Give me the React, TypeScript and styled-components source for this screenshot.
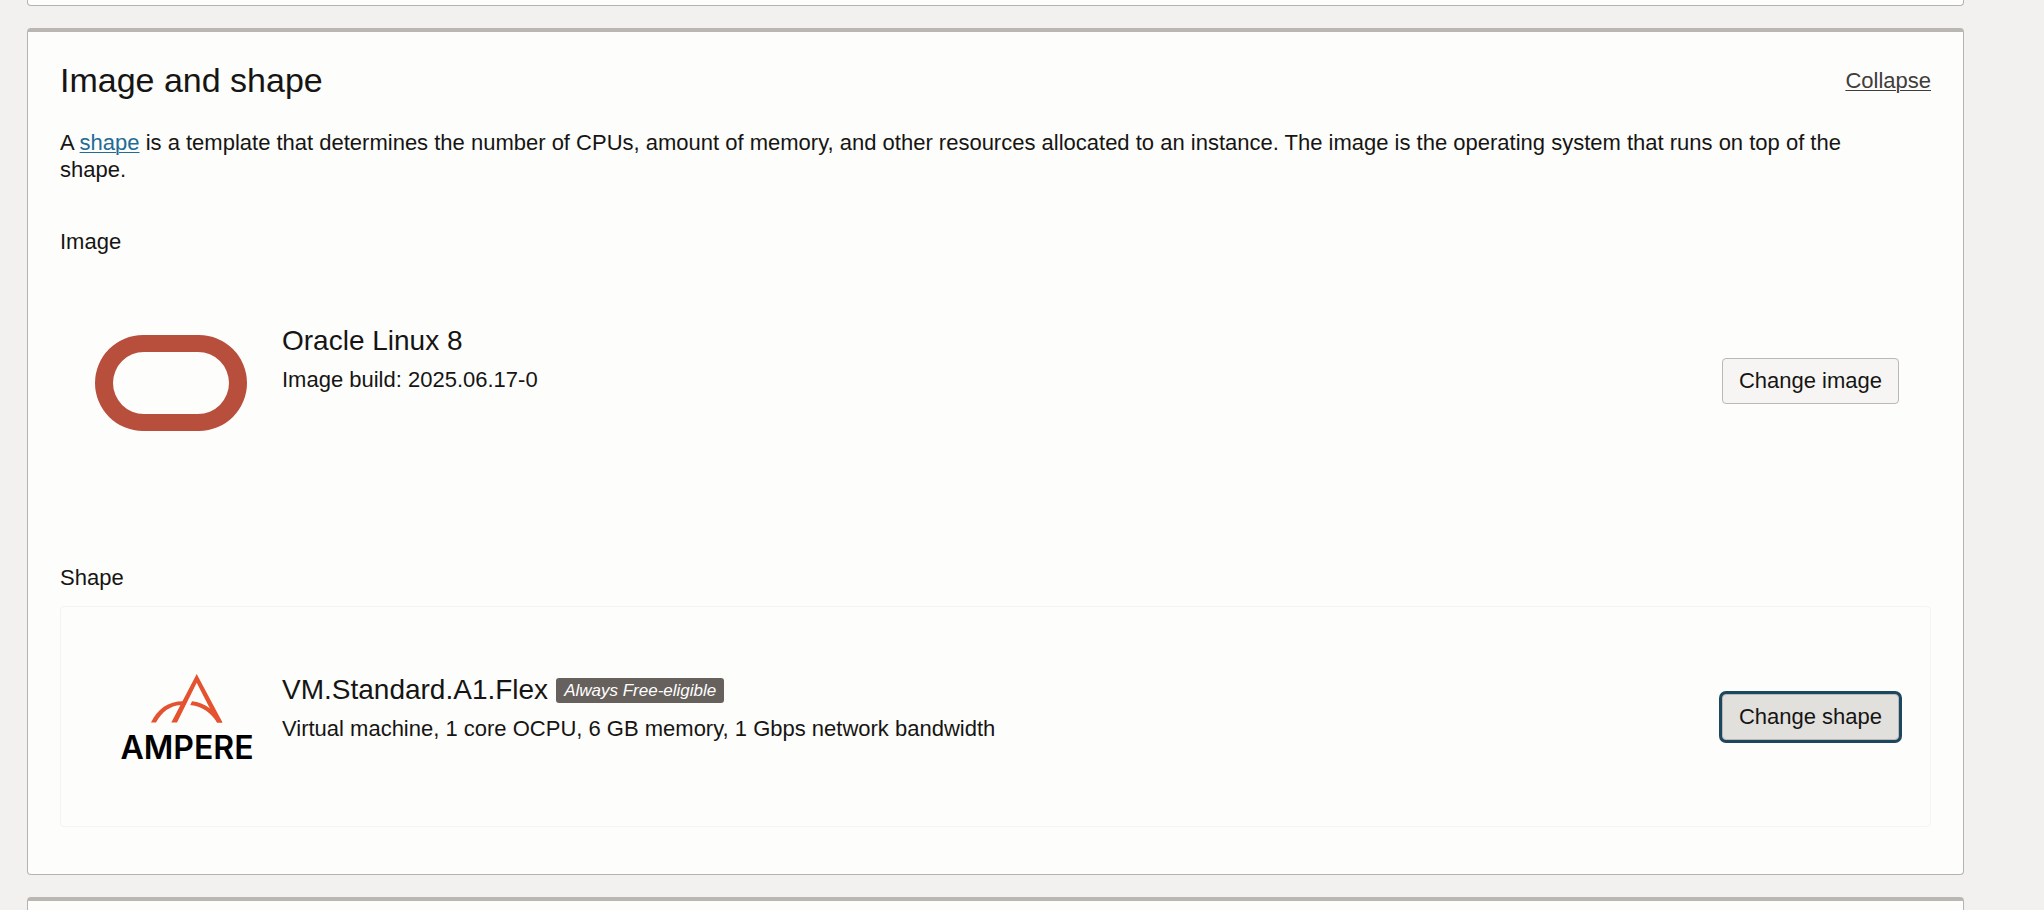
import React from "react";
import styled, { createGlobalStyle, css } from "styled-components";

const GlobalStyle = createGlobalStyle`
  *, *::before, *::after { box-sizing: border-box; }
  body {
    margin: 0;
    background: #f2f1f0;
    color: #161513;
    font-family: "Liberation Sans", Arial, sans-serif;
    font-size: 22px;
    line-height: 27px;
  }
  h2, h3, h4, p { margin: 0; font-weight: 400; }
`;

const Page = styled.main`
  display: flex;
  flex-direction: column;
  gap: 22px;
  min-height: 100vh;
  padding: 0 80px 0 27px;
`;

const Panel = styled.section`
  padding: 28px 32px 47px;
  background: #fdfdfc;
  border: 1px solid #b5b3b0;
  border-top: 4px solid #bab6b1;
  border-radius: 4px;
`;

const PreviousPanel = styled(Panel)`
  padding: 5px 0 0;
  border-top: 0;
  border-radius: 0 0 4px 4px;
`;

const NextPanel = styled(Panel)`
  flex: 1;
  padding: 0;
  border-bottom: 0;
  border-radius: 4px 4px 0 0;
`;

const PanelHeader = styled.header`
  display: flex;
  align-items: center;
  justify-content: space-between;
`;

const PanelTitle = styled.h2`
  font-size: 34px;
  line-height: 40px;
`;

const CollapseLink = styled.a`
  color: #403e3b;
  text-underline-offset: 2px;
  text-decoration-thickness: 1px;
`;

const Description = styled.p`
  margin-top: 29px;
  padding-right: 32px;

  a {
    color: #226b95;
    text-decoration-thickness: 1px;
    text-underline-offset: 2px;
  }
`;

const Field = styled.section<{ $gap: number }>`
  margin-top: ${({ $gap }) => $gap}px;
`;

const FieldLabel = styled.h3`
  margin-bottom: 15px;
  font-size: 22px;
`;

const OptionBox = styled.div<{ $outlined?: boolean }>`
  display: flex;
  align-items: center;
  min-height: 221px;
  padding: 0 31px 0 23px;
  border: 1px solid ${({ $outlined }) => ($outlined ? "#f4f4f3" : "transparent")};
  border-radius: 4px;
`;

const Logo = styled.svg`
  flex: none;
  width: 182px;
  height: 100px;
  margin-right: 16px;
`;

const OptionText = styled.div<{ $spaceBelow: number }>`
  flex: 1;
  padding-bottom: ${({ $spaceBelow }) => $spaceBelow}px;
`;

const OptionTitle = styled.h4`
  display: flex;
  align-items: center;
  gap: 8px;
  margin-bottom: 8px;
  font-size: 28px;
  line-height: 34px;
`;

const Badge = styled.span`
  padding: 0 8px;
  border-radius: 3px;
  background: #66615c;
  color: #fff;
  font-size: 17px;
  font-style: italic;
  line-height: 25px;
`;

const ChangeButton = styled.button<{ $active?: boolean }>`
  flex: none;
  height: 46px;
  padding: 0 16px;
  border: 1px solid #bbb8b5;
  border-radius: 4px;
  background: #f6f5f4;
  color: #161513;
  font: inherit;
  ${({ $active }) =>
    $active &&
    css`
      background: #e2e0dd;
      box-shadow: 0 0 0 3px #1d475e;
    `}
`;

const Wordmark = styled.text`
  fill: #000;
  font-family: Inter, sans-serif;
  font-size: 32px;
  font-weight: 600;
`;

function OracleLogo() {
  return (
    <Logo viewBox="0 0 182 100" role="img" aria-label="Oracle">
      <path
        fill="#b84f3c"
        fillRule="evenodd"
        d="M59 4h56a48 48 0 0 1 0 96H59a48 48 0 0 1 0-96Zm1 17a31 31 0 0 0 0 62h54a31 31 0 0 0 0-62Z"
      />
    </Logo>
  );
}

function AmpereLogo() {
  return (
    <Logo viewBox="0 0 182 100" role="img" aria-label="Ampere">
      <g fill="#e5522f">
        <path d="M112.7 7 138.5 55.500h-5.400L112.700 15.800 93 55.500h-5.700Z" />
        <path d="M67 55.500C73.500 42 84 34.200 99 34.200l-2 3.900C85.500 39 78 45 72 55.500Z" />
        <path d="M108 34.200C121 35.600 131.500 43.500 138.300 55.500h-5.200C127 46 119 39.500 106.300 38Z" />
      </g>
      <Wordmark x="103" y="92" textAnchor="middle">
        AMPERE
      </Wordmark>
    </Logo>
  );
}

export default function App() {
  return (
    <>
      <GlobalStyle />
      <Page>
        <PreviousPanel />
        <Panel>
          <PanelHeader>
            <PanelTitle>Image and shape</PanelTitle>
            <CollapseLink href="#collapse">Collapse</CollapseLink>
          </PanelHeader>
          <Description>
            A <a href="#shape">shape</a> is a template that determines the number of CPUs, amount of
            memory, and other resources allocated to an instance. The image is the operating system
            that runs on top of the shape.
          </Description>

          <Field $gap={45}>
            <FieldLabel>Image</FieldLabel>
            <OptionBox>
              <OracleLogo />
              <OptionText $spaceBelow={44}>
                <OptionTitle>Oracle Linux 8</OptionTitle>
                <p>Image build: 2025.06.17-0</p>
              </OptionText>
              <ChangeButton type="button">Change image</ChangeButton>
            </OptionBox>
          </Field>

          <Field $gap={73} id="shape">
            <FieldLabel>Shape</FieldLabel>
            <OptionBox $outlined>
              <AmpereLogo />
              <OptionText $spaceBelow={18}>
                <OptionTitle>
                  VM.Standard.A1.Flex <Badge>Always Free-eligible</Badge>
                </OptionTitle>
                <p>Virtual machine, 1 core OCPU, 6 GB memory, 1 Gbps network bandwidth</p>
              </OptionText>
              <ChangeButton type="button" $active>
                Change shape
              </ChangeButton>
            </OptionBox>
          </Field>
        </Panel>
        <NextPanel />
      </Page>
    </>
  );
}
